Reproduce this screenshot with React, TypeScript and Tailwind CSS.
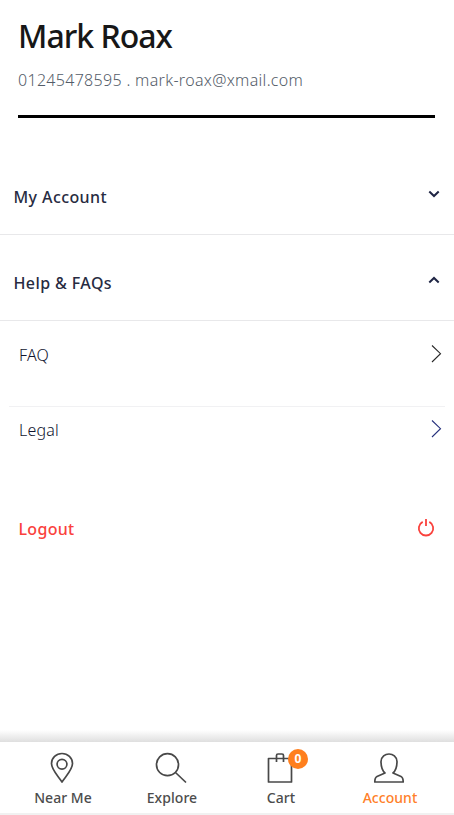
import React from 'react';

function Chevron({ up = false }: { up?: boolean }) {
  return (
    <svg width="12" height="8" viewBox="0 0 12 8" fill="none" stroke="#1f2544" strokeWidth="2">
      <path d={up ? 'M1.300 6.500 6 2l4.700 4.500' : 'M1.300 1.500 6 6l4.700-4.500'} />
    </svg>
  );
}

function Section({ title, open }: { title: string; open: boolean }) {
  return (
    <button className="flex h-[86px] w-full items-start justify-between border-b border-[#e8e8ea] pl-[13.5px] pr-[14px] pt-9 text-left">
      <span className="text-[16px] font-medium leading-6 tracking-[0.4px] text-[#272b41]">{title}</span>
      <span className="mt-[5px] flex"><Chevron up={open} /></span>
    </button>
  );
}

function LinkRow({ label, color, className }: { label: string; color: string; className: string }) {
  return (
    <a className={`mx-[9px] flex items-start justify-between pl-[10px] pr-[3px] ${className}`}>
      <span className="text-[16px] font-light leading-6 tracking-[0.2px] text-[#10152f]">{label}</span>
      <svg className="mt-[2px]" width="11" height="18" viewBox="0 0 11 18" fill="none" stroke={color} strokeWidth="1.1">
        <path d="M1 .5 9.500 8.700 1 17" />
      </svg>
    </a>
  );
}

function Tab({ label, active = false, badge, children }: { label: string; active?: boolean; badge?: string; children: React.ReactNode }) {
  return (
    <a className="flex w-[109px] flex-col items-center">
      <span className="relative -left-[1.5px] flex h-8 w-8">
        <svg width="32" height="32" viewBox="0 0 32 32" fill="none" stroke="#484848" strokeWidth="1.7" strokeLinejoin="round">
          {children}
        </svg>
        {badge && (
          <span className="absolute left-[24.5px] top-[-3px] flex h-5 w-5 items-center justify-center rounded-full bg-[#ff7f1d] text-[12px] font-bold leading-none text-white">
            {badge}
          </span>
        )}
      </span>
      <span className={`mt-[3px] text-[14px] font-medium leading-[21px] tracking-[0.05px] ${active ? 'text-[#ff7f2a]' : 'text-[#4c4c4c]'}`}>{label}</span>
    </a>
  );
}

export default function App() {
  return (
    <div className="flex h-[815px] w-[454px] flex-col overflow-hidden bg-white font-['Noto_Sans','Open_Sans',sans-serif]">
      <header className="ml-[18px] mr-[19px] h-[118px] border-b-[3px] border-black pt-4">
        <h1 className="text-[32px] font-medium leading-[40px] tracking-[-1px] text-[#171717]">Mark Roax</h1>
        <p className="mt-3 text-[16px] font-light leading-6 tracking-[0.31px] text-[#535c68]">01245478595 . mark-roax@xmail.com</p>
      </header>
      <main className="flex-1 pt-[31px]">
        <Section title="My Account" open={false} />
        <Section title="Help & FAQs" open />
        <LinkRow label="FAQ" color="#282828" className="h-[86px] border-b border-[#f1f1f3] pt-[22px]" />
        <LinkRow label="Legal" color="#25307c" className="h-[74px] pt-[11px]" />
        <button className="mt-9 flex w-full items-center justify-between pl-[18.5px] pr-[19px]">
          <span className="text-[16px] font-medium leading-6 tracking-[0.3px] text-[#fa413c]">Logout</span>
          <svg className="-mt-[2px]" width="18" height="20" viewBox="0 0 18 20" fill="none" stroke="#fa413c" strokeWidth="1.8">
            <path d="M9 1v7M5.700 3.900a7.200 7.200 0 1 0 6.600 0" />
          </svg>
        </button>
      </main>
      <div className="h-3 bg-linear-to-b from-white to-[#dfdfdf]" />
      <nav className="-ml-px flex h-[73px] justify-center border-b-2 border-[#f1f1f1] bg-white pt-[10px]">
        <Tab label="Near Me">
          <path d="M16 30C13 25 5.500 18 5.500 11.500a10.500 10 0 0 1 21 0C26.500 18 19 25 16 30Z" />
          <circle cx="16" cy="12.300" r="4.900" />
        </Tab>
        <Tab label="Explore">
          <circle cx="12.500" cy="12.700" r="11" />
          <path d="m20.500 20.500 10.500 10" />
        </Tab>
        <Tab label="Cart" badge="0">
          <path d="M4.500 6.500h23v23.500h-23zM12.500 10V3.500q0-1.500 1.500-1.500h4q1.500 0 1.500 1.500V10" />
        </Tab>
        <Tab label="Account" active>
          <path d="M12 21C8 17.500 8 12 8 9.500c.5-10 15.500-10 16 0 0 2.500 0 8-4 11.500l8 3.500c2 1 2.200 2.500 2.200 5.500h-28.400C1.800 27 2 25.500 4 24.500Z" />
        </Tab>
      </nav>
    </div>
  );
}
